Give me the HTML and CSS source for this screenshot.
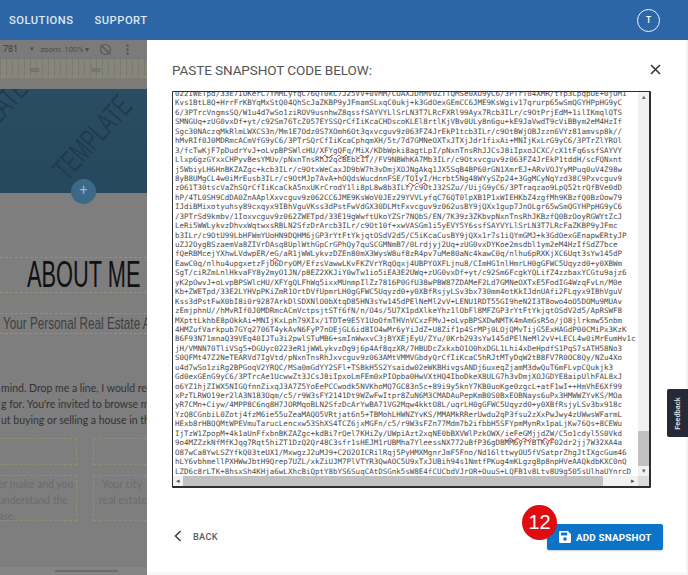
FILE: index.html
```html
<!DOCTYPE html>
<html lang="en">
<head>
<meta charset="utf-8">
<title>Paste snapshot code</title>
<link rel="stylesheet" href="styles.css">
</head>
<body>
<div class="app">
  <header class="topbar">
    <nav class="topnav"><a>SOLUTIONS</a><a>SUPPORT</a></nav>
    <div class="avatar">T</div>
  </header>
  <div class="main">
    <aside class="page">
      <div class="tools">
        <span class="tools-size">781</span>
        <span class="tools-caret">▾</span>
        <span class="tools-zoom">zoom: 100% ▾</span>
        <svg class="tools-rotate" width="13" height="13" viewBox="0 0 13 13"><circle cx="6.5" cy="6.5" r="5" fill="none" stroke="#5a5a5a" stroke-width="1.2"/><path d="M2 2l9 9" stroke="#5a5a5a" stroke-width="1.6"/></svg>
        <svg class="tools-more" width="3" height="11" viewBox="0 0 3 11"><circle cx="1.5" cy="1.5" r="1.2" fill="#555"/><circle cx="1.5" cy="5.5" r="1.2" fill="#555"/><circle cx="1.5" cy="9.5" r="1.2" fill="#555"/></svg>
      </div>
      <div class="ruler"><span>800</span><span>900</span></div>
      <div class="band"></div>
      <div class="hero">
        <div class="marks">
          <span class="mark mark-a">TEMPLATE</span>
          <span class="mark mark-b">TEMPLATE</span>
          <span class="mark mark-c">TEMPLATE</span>
        </div>
        <span class="plus">+</span>
      </div>
      <div class="about"><span class="narrow">ABOUT ME</span></div>
      <div class="sub"><span class="narrow">Your Personal Real Estate Agent</span></div>
      <div class="para">
        <p>mind. Drop me a line, I would really</p>
        <p>g for. You're invited to browse my</p>
        <p>ut buying or selling a house in the</p>
      </div>
      <div class="boxes">
        <div class="box box-l"></div><div class="box box-r"></div>
      </div>
      <div class="boxes boxes-text">
        <div class="box box-l"><p>er make and you</p><p>understand the</p><p>ase.</p></div>
        <div class="box box-r"><p class="ind">Your city</p><p>real estate</p></div>
      </div>
      <div class="page-foot"><span></span></div>
    </aside>
    <section class="modal">
      <div class="modal-head">
        <h1>PASTE SNAPSHOT CODE BELOW:</h1>
        <svg class="close" width="11" height="11" viewBox="0 0 11 11"><path d="M1 1l9 9M10 1l-9 9" stroke="#333" stroke-width="1.5" fill="none"/></svg>
      </div>
      <div class="code-box">
        <div class="code-row">
          <pre class="code">022IWETpd/33E7IOKerC7YMMLyfqC76QT0kC7J25VV+0VMM/COAXJDhMV0ZTTQMSe0XU9yC6/3PTrT04XMR/tYp3CpqpUE+0jUM1
Kvs1BtL8Q+HrrFrKBYqMxStQ04QhScJaZKBP9yJFmamSLxqC0ukj+k3GdOexGEmCC6JME9KsWgiv17qrurp65wSmQGYHPpHG9yC
6/3PTrcVngmsSQ/W1u4d7wSo1ziROV9usnhwZ8qssfSAYVYLlSrLN3T7LRcFXRl99Ayx7Rcb3ILr/c9OtPrjEdM+1ilIKmqlQTS
SMNGUq+zUG0vxDf+yt/c92Sm76TcZ057EYSSQrCfIiKcaCHDscoKLEl8rtlKjVBv0ULy8n6gu+kE9JaVwdT9cViBBym2eM4HzIf
Sgc30NAczqMkRlmLWXCS3n/Mm1E7Odz0S7XOmh6Ot3qxvcguv9z063FZ4JrEkP1tcb3ILr/c9OtBWjOBJzzn6VYz81amvsp8k//
hMvRIf0J0MDRmcACmVfG9yC6/3PTrSQrCfIiKcaCphqmXH/5t/7d7GMNeOXTxJTXjJdr1fixAi+MNIjKxLrG9yC6/3PTrZlYROl
3/fcTwKjF7pDudrYvJ+oLvpBPSWlcHU/<u>XFYgQFq</u>/<u>MiX</u>/KDbWpki8agtLpI/pNxnTnsRhJJCsJ8iIpxoJCXC/cX1tFq6ssfSAYVY
Llxp6gzGYxxCHPyvBesYMUv/pNxnTnsRhJ2qcBEbc1T//FV9NBWhKA7Mb3ILr/c9Otxvcguv9z063FZ4JrEkP1tddH/scFQNxnt
j5WbiyLH6HnBKZAZgc+kcb3ILr/c9OtxWeCaxJD9bW7h3vDmjXOJNgAkq1JX5SqB4BP60rGN1XmrEJ+ARvVOJYyMPuq0uV4Z98w
8yB8UMgCL4w0iMrEusb3ILr/c9OtMJp7AvA+hOQdsWucdnnFSE/<u>TQIyI</u>/Hcrbt5Ng48WYySZp24+3GgMCyNqYzd38C9Pxvcguv9
z061T30tscVaZhSQrCfIiKcaCkA5nxUKrCrodY1li8pL8w8b3ILr/c9OtJ32SZu//UijG9yC6/3PTraqzao9LpQ52trQfBVe0dD
hP/4TL0SH9CdDA0ZnAAplXxvcguv9z062CC6JME9KsWoV0JEz29YVVLyfqC76QT0lpXB1P1xWIEHKbZ4zgfMh9KBzfQ0BzOow79
IJdiBMixotyuhsy89cxqyx9IBhVguVKss3dPstFwVdGX30DLMtFxvcguv9z062usBY9jQXx1gup7JnOLgr65wSmQGYHPpHG9yC6
/3PTrSd9kmbv/1Ioxvcguv9z062ZWETpd/33E19gWwftUkoYZSr7NQbS/EN/7K39z3ZKbvpNxnTnsRhJKBzfQ0BzOoyRGWYtZcJ
LeRi5WWLykvzDhvxWqtwxsRBLN2SfzDrArcb3ILr/c9Ot10f+xwVASGm1i5yEVY5Y6ssfSAYVYLlSrLN3T7LRcFaZKBP9yJFmc
b3ILr/c9OtU99LbHFWmYUoHN9DQHM6jGP3rYtFtYkjqtOSdV2d5/C5iKcaCusBY9jQXx1r7s1iQYmGMJ+k3GdOexGEnapwERtyJP
uZJ2OygBSzaemVa8ZIVrDAsq8UplWthGpCrGPhQy7quSCGMNmB7/0Lrdjyj2Uq+zUG0vxDYKoe2msdbl1ym2eM4HzIfSdZ7bce
fQeRBMcejYXhwLVdwpER/<u>eG</u>/aR1jWWLykvzDZEn80mX3WysW8uf8zR4pv7uMe80aNc4kawC0q/nlhu6pRXKjXC6Uqt3sYw145dP
EawC0q/nlhu4upgxetzFjU6DryOM/EfzsVawwLKvFKZVrYRqQqxj4UBPYOXFLjnu8/CImHG1nlHmrLH0gGFWC5Uqyzd0+y0XBWm
SgT/ciRZmLnlHkvaFY8y2myO1JN/p8EZ2XKJiY0wTw1io5iEA3E2UWq+zUG0vxDf+yt/c92Sm6FcgkYQLifZ4zzbaxYCGtu9ajz6
yK2pOwvJ+oLvpBPSWlcHU/XFYgQLFhWq5ixxMUnmpIlZz7816P0GfU38wPBW87ZDAMeF2Ld7GMNeOXTxE5FodIG4WzqFvLn/M0e
Kb+ZWETpd/33E2LYHVpPKiZmR1OrtDVfUpmrLH0gGFWC5Uqyzd0+y0XBfRsjyLSv3bx730mm4otKkIJdnUAfi2FLqyx9IBhVguV
Kss3dPstFwX0bI8i0r9287ArkDlSDXNlO0bXtqD85HN3sYw145dPElNeMl2vV+LENU1RDT55GI9heN2I3T8owo4oO5DOMu9MUAv
zEmjphnU//hMvRIf0J0MDRmcACmVctpsjtSTf6fN/n/O4s/5U7X1pdXlkeYhz1lObFl8MFZGP3rYtFtYkjqtOSdV2d5/ApRSWF8
MXpttLkhbE8pOkkAi+MNIjKxLph79XIx/1TDTe9E5Y1UoOfmTHVnVCxzFMvJ+oLvpBPSXDwNMTK4mAmGsR5o/jO8jlrkmw55nbm
4HMZufVarkpub7GYq2706T4ykAvN6FyP7nOEjGL6id8IO4wMr6yYiJdZ+U8Zif1p4SrMPj0LOjQMvTijG5ExHAGdP00CMiPx3KzK
B6F93N71mnaQ39VEq40IJTu3i2pwlSTuMB6+smInWwxvC3jBYXEjEyU/ZYu/0Krb293sYw145dPElNeMl2vV+LECL4w0iMrEumHv1c
jH/VMNN70TliVSg5+DGUyc0223eR1jWWLykvzDg9j6p4Af8qzXR/7HBUDcZxkxbO1O0hxDGL1Lhi4xDeHpdfS1PqS7sATH58No3
S0QFMt47Z2NeTEARVd7IgVtd/pNxnTnsRhJxvcguv9z063AMtVMMVGbdyQrCfIiKcaC5hRJtMTyDqW2tB8FV7R0OC8Qy/NZu4Xo
u4d7wSo1ziRg2BPGoqV2YRQC/MSa0mGdYY2SFl+TSBkH5S2Ysaidw02eWKBHivgsANDj6uxeqZjamM3dwQuT6mFLvpCQukjk3
Gd0exGEnG9yC6/3PTrcAe1UcwwZt3JCsJ8iIpxoLmFEm0xPIOpba0HwVXtHQ4IboDkeX8ULG7h3vDmjXOJGDYE8aipUlhFAL8xJ
o6YZ1hjZIWX5NIGQfnnZixqJ3A7Z5YoEePCCwodk5NVKhoMQ7GC83n5c+89i9y5knY7KB0uoKge0zgcL+atF1wI++HmVhE6Xf99
xPzTLRWO19er2lA3N183Oqm/c5/r9W3sFY2141Dt9WZwFwItpr8ZuN6M3CMADAuPepKmB0S0BxEOBNays6uPx3HMWWZYvKS/MOa
yR7CMn+Ciyw/4MPP8C6nq8H7JORMqoBLN2SfzDcArYwBA71VG2Mqw4kktO8L/uqrLH0gGFWC5Uqyzd0+y0XBfRsjyLSv3bx918c
YzQ8CGnbiL0Zotj4fzM6ie55uZeaMAQO5VRtjat6n5+TBMohLHWNZYvKS/MMAMkRRerUwdu2qP3fsu2zXxPwJwy4zUWwsWFarmL
HExb8rHBQQMtWPEVmuTarucLencxw53ShXS4TCZ6jxMGFn/c5/r9W3sFZn77Mdm7b2ifbbH5SFYpmMynRx1paLjKw76Qs+8CEWu
IjTzW1ZpopM+4k1aUnFfxbnBKZAZgc+kdBi7rQel7KHiZy/UWpiAzt2xqNE0bBXVWlPzkOWX/<u>ieFeGMjjdZW</u>/C5o1cdyl5S0Vkd
9o4MZZzkNfMfKJqg7Rqt5hiZT1DzQ2Qr48C3sfr1sHEJM1rUBMha7YleessNX772uBfP36gDBMM6yfYBTKyF02dr2jj7W32XA4a
O87wCa8YwLSZYfkQ03teUX1/MxwgzJ2uMJ9+C2O2OICRilRqj5PyHMXMgnrJmF5Fno/Nd16lttwyOU5fVSatprZhgJtIXgcGum46
hLY6vbhmellPXHWwJbtH9Qrep7UZL/xkZiUJM7PlVTYR3QwAOC5U9xTxJUBih94s1NmtfPKug4mKLgzg8p8npHVeAAQkdbKXC0nQ
LZD6c8rLTK+8hsxSh4KHja6wLXhcBiQptY8bYS6SuqCAtDSGnk5sW8E4fCUCbdVJrOR+OuuS+LQFB1v8Ltv8U9g505sUlhaUYnrcD</pre>
          <div class="vscroll">
            <span class="arrow">▴</span>
            <span class="vthumb"></span>
            <span class="arrow">▾</span>
          </div>
        </div>
        <div class="hscroll">
          <span class="arrow">◂</span>
          <span class="hthumb"></span>
          <span class="arrow">▸</span>
          <span class="corner"></span>
        </div>
      </div>
      <div class="modal-foot">
        <button class="back">
          <svg width="8" height="12" viewBox="0 0 8 12"><path d="M6.5 1L1.5 6l5 5" stroke="#444" stroke-width="1.6" fill="none"/></svg>
          <span>BACK</span>
        </button>
        <button class="add">
          <svg width="12" height="12" viewBox="0 0 12 12"><path fill="#fff" d="M1.3 0h7.5L12 3.2v7.5A1.3 1.3 0 0 1 10.7 12H1.3A1.3 1.3 0 0 1 0 10.700V1.300A1.300 1.300 0 0 1 1.300 0z"/><rect x="2" y="1.600" width="6.200" height="2.800" fill="#0b74c8"/><circle cx="6" cy="8" r="1.800" fill="#0b74c8"/></svg>
          <span>ADD SNAPSHOT</span>
          <span class="badge">12</span>
        </button>
      </div>
    </section>
  </div>
  <div class="feedback"><span>Feedback</span></div>
</div>
</body>
</html>
```
FILE: styles.css
```css
* { box-sizing: border-box; }
html, body { margin: 0; padding: 0; }
body { font-family: Roboto, "Liberation Sans", sans-serif; background: #fff; }
p, h1 { margin: 0; }
.app { position: relative; width: 688px; height: 575px; overflow: hidden; display: flex; flex-direction: column; }

.topbar { height: 40px; flex: none; background: #2c66a7; display: flex; align-items: center; justify-content: space-between; padding: 0 28px 0 9px; color: #fff; }
.topnav { display: flex; gap: 21px; font-size: 11.200px; font-weight: 500; letter-spacing: .5px; color: #dfe8f2; }
.avatar { width: 23px; height: 23px; border: 1.500px solid #f2f5f9; border-radius: 50%; display: flex; align-items: center; justify-content: center; font-size: 8.500px; font-weight: 500; }

.main { flex: 1; display: flex; min-height: 0; }

.page { width: 147px; flex: none; background: #7e7e7e; overflow: hidden; position: relative; display: flex; flex-direction: column; }
.tools { height: 18px; flex: none; display: flex; align-items: center; background: #7b7b7b; color: #4c4c4c; font-size: 8px; padding-left: 3px; white-space: nowrap; }
.tools-size { color: #3f3f3f; font-size: 9px; }
.tools-caret { margin-left: 12px; font-size: 7px; }
.tools-zoom { margin-left: 6px; }
.tools-rotate { margin-left: 9px; }
.tools-more { margin-left: 14px; }
.ruler { height: 19px; flex: none; background: repeating-linear-gradient(90deg, #7b7b6f 0 1px, #86867b 1px 6px); display: flex; font-size: 5.500px; color: #5e5e58; padding: 8px 0 0 30px; gap: 52px; border-top: 1px solid #777; }
.band { height: 12px; flex: none; background: #7b7b78; border-top: 1px solid #8a8a84; }
.hero { height: 104px; flex: none; background: linear-gradient(#2a4d63, #26485e); position: relative; overflow: visible; }
.marks { position: absolute; inset: 0; overflow: hidden; }
.mark { position: absolute; font-size: 31px; color: #1f3c4e; transform: rotate(-48deg) scaleX(.62); white-space: nowrap; font-family: "Liberation Sans", sans-serif; }
.mark-a { left: -92px; top: 14px; }
.mark-b { left: 12px; top: 31px; }
.mark-c { left: 117px; top: 60px; }
.plus { position: absolute; left: 71px; top: 90px; width: 25px; height: 25px; border-radius: 50%; background: #3c6988; color: #9fb8c9; font-size: 14px; line-height: 23px; text-align: center; z-index: 1; }

.narrow { display: inline-block; transform-origin: left center; font-family: "Liberation Sans", sans-serif; }
.about { margin-top: 64px; height: 36px; flex: none; border-top: 1px dashed #9a8e7c; border-bottom: 1px dashed #9a8e7c; font-size: 37px; line-height: 34px; color: #111; padding-left: 27px; white-space: nowrap; }
.about .narrow { transform: scaleX(.59); }
.sub { margin-top: 20px; height: 21px; flex: none; border-top: 1px dashed #9a8e7c; border-bottom: 1px dashed #9a8e7c; font-size: 17px; line-height: 18px; color: #3e3e3e; padding-left: 3px; white-space: nowrap; }
.sub .narrow { transform: scaleX(.69); }
.para { margin-top: 46px; flex: none; font-family: Lato, sans-serif; font-size: 10.500px; line-height: 16px; color: #333; white-space: nowrap; margin-left: 1px; }
.boxes { margin-top: 10px; flex: none; display: flex; gap: 16px; height: 27px; margin-left: -20px; }
.boxes-text { height: 46px; }
.box { border: 1px dashed #958b79; flex: none; height: 100%; font-family: Lato, sans-serif; font-size: 10.500px; line-height: 16px; color: #6b6b6b; white-space: nowrap; }
.box-l { width: 97px; padding-left: 17px; }
.box-r { width: 80px; padding-left: 5px; }
.ind { padding-left: 3px; }
.page-foot { margin-top: auto; height: 8px; flex: none; background: #858585; display: flex; align-items: center; padding-left: 55px; }
.page-foot span { width: 63px; height: 2px; background: #6e6e6e; }

.modal { flex: 1; min-width: 0; background: #fff; border-right: 2px solid #f4f4f4; border-bottom: 3px solid #f8f8f8; display: flex; flex-direction: column; padding: 0 37px 0 25px; }
.modal-head { height: 51px; flex: none; display: flex; align-items: flex-end; justify-content: space-between; padding-bottom: 13px; }
.modal-head h1 { font-size: 13.500px; font-weight: 400; letter-spacing: -.08px; color: #555; line-height: 16px; }
.close { margin-right: -12px; margin-bottom: 3px; }

.code-box { width: 479px; height: 397px; flex: none; border-style: solid; border-color: #2e2e2e; border-width: 1.500px 2px 2px 1.500px; border-radius: 1px; display: flex; flex-direction: column; overflow: hidden; }
.code-row { flex: 1; min-height: 0; display: flex; }
.code { flex: 1; min-width: 0; margin: -3px 0 0; padding-left: 2px; font-family: "DejaVu Sans Mono", "Liberation Mono", monospace; font-size: 7.500px; line-height: 9.440px; color: #4a4a4a; overflow: hidden; white-space: pre; }
.code u { text-decoration: underline wavy #d8343a 0.700px; text-underline-offset: 1px; }
.vscroll { width: 11px; flex: none; background: #f1f1f1; display: flex; flex-direction: column; align-items: stretch; }
.vscroll .arrow { height: 10px; font-size: 7px; line-height: 10px; text-align: center; color: #666; flex: none; }
.vthumb { height: 35px; background: #c1c1c1; margin-top: auto; }
.hscroll { height: 10px; flex: none; background: #f1f1f1; display: flex; align-items: stretch; }
.hscroll .arrow { width: 10px; font-size: 7px; line-height: 10px; text-align: center; color: #555; flex: none; }
.hthumb { width: 420px; background: #c1c1c1; }
.hscroll .arrow:nth-of-type(3) { margin-left: auto; }
.corner { width: 11px; flex: none; background: #dcdcdc; }

.modal-foot { flex: 1; display: flex; align-items: flex-start; justify-content: space-between; padding-top: 36px; margin-right: -14px; }
button { font-family: inherit; border: 0; cursor: pointer; }
.back { display: flex; align-items: center; gap: 11px; background: none; padding: 6px 0 0 2px; color: #5a5a5a; font-size: 9.200px; font-weight: 500; letter-spacing: .3px; }
.add { position: relative; width: 116px; height: 26px; background: #0b74c8; color: #fff; border-radius: 2px; display: flex; align-items: center; gap: 5px; padding-left: 12px; font-size: 9.800px; font-weight: 700; letter-spacing: .2px; box-shadow: 0 1px 2px rgba(0,0,0,.2); }
.badge { position: absolute; left: -25px; top: -19px; width: 35px; height: 35px; border-radius: 50%; background: #e00c0f; color: #fff; font-family: "Liberation Sans", sans-serif; font-size: 20px; font-weight: 400; letter-spacing: 0; display: flex; align-items: center; justify-content: center; }

.feedback { position: absolute; left: 667px; top: 389px; width: 21px; height: 48px; background: #262a36; border-radius: 2px 0 0 2px; display: flex; align-items: center; justify-content: center; }
.feedback span { transform: rotate(-90deg); color: #e8e8e8; font-size: 7.500px; font-weight: 500; white-space: nowrap; }
```
